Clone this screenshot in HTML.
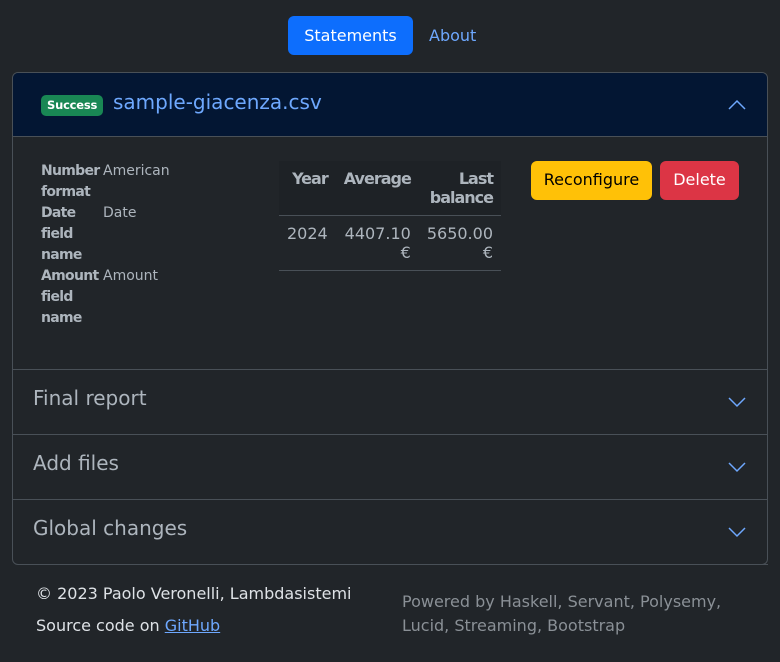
<!DOCTYPE html>
<html><head><meta charset="utf-8"><style>
*{box-sizing:border-box;margin:0;padding:0}
body{width:780px;height:662px;background:#212529;color:#dee2e6;font-family:"DejaVu Sans","Liberation Sans",sans-serif;font-size:16px;position:relative;overflow:hidden}
.abs{position:absolute}
.btnp{left:288px;top:16px;width:125px;height:39px;background:#0d6efd;color:#fff;border-radius:6px;text-align:center;line-height:39px;font-size:16px}
.about{left:429px;top:16px;line-height:39px;color:#6ea8fe}
.card{left:12px;top:72px;width:756px;height:493px;border:1px solid #495057;border-radius:6px;overflow:hidden}
.hdr{left:0;top:0;width:754px;height:64px;background:#031633;border-bottom:1px solid #495057}
.badge{left:28px;top:22px;background:#198754;color:#fff;font-size:11.5px;font-weight:bold;border-radius:5px;padding:0 6px;height:21px;line-height:21px;letter-spacing:-0.2px}
.fname{left:100px;top:17px;color:#6ea8fe;font-size:20px}
.dl{font-size:14px;line-height:21px;color:#adb5bd}
.dt{font-weight:bold;letter-spacing:-0.7px}
.item{left:0;width:754px;height:65px;border-top:1px solid #495057}
.item span{position:absolute;left:20px;top:16px;font-size:20px;color:#adb5bd}
.item svg{position:absolute;left:714px;top:24px}
th,td{font-size:16px;color:#adb5bd;text-align:right;padding:8px 8px;line-height:19px;vertical-align:top;font-weight:normal}
th{background:#1e2226;font-weight:bold;letter-spacing:-1px}
td{border-top:1px solid #495057;border-bottom:1px solid #495057}
</style></head><body>
<div class="abs btnp">Statements</div>
<div class="abs about">About</div>
<div class="abs card">
 <div class="abs hdr">
  <div class="abs badge">Success</div>
  <div class="abs fname">sample-giacenza.csv</div>
  <svg class="abs" style="left:714px;top:24px" width="20" height="16"><path d="M2 12 L10 4 L18 12" fill="none" stroke="#6ea8fe" stroke-width="1.5"/></svg>
 </div>
 <div class="abs dl" style="left:28px;top:88px">
  <div class="abs dt" style="left:0;top:0;width:60px">Number format</div>
  <div class="abs" style="left:62px;top:0">American</div>
  <div class="abs dt" style="left:0;top:42px;width:50px">Date field name</div>
  <div class="abs" style="left:62px;top:42px">Date</div>
  <div class="abs dt" style="left:0;top:105px;width:60px">Amount field name</div>
  <div class="abs" style="left:62px;top:105px">Amount</div>
 </div>
 <table class="abs" style="left:266px;top:88px;width:222px;border-collapse:collapse">
  <tr><th>Year</th><th>Average</th><th>Last balance</th></tr>
  <tr><td>2024</td><td>4407.10 €</td><td>5650.00 €</td></tr>
 </table>
 <div class="abs" style="left:518px;top:88px;width:121px;height:39px;background:#ffc107;color:#000;border-radius:6px;text-align:center;line-height:38px">Reconfigure</div>
 <div class="abs" style="left:647px;top:88px;width:79px;height:39px;background:#dc3545;color:#fff;border-radius:6px;text-align:center;line-height:38px">Delete</div>
 <div class="abs item" style="top:296px"><span>Final report</span><svg width="20" height="16"><path d="M2 4 L10 12 L18 4" fill="none" stroke="#6ea8fe" stroke-width="1.5"/></svg></div>
 <div class="abs item" style="top:361px"><span>Add files</span><svg width="20" height="16"><path d="M2 4 L10 12 L18 4" fill="none" stroke="#6ea8fe" stroke-width="1.5"/></svg></div>
 <div class="abs item" style="top:426px"><span>Global changes</span><svg width="20" height="16"><path d="M2 4 L10 12 L18 4" fill="none" stroke="#6ea8fe" stroke-width="1.5"/></svg></div>
</div>
<div class="abs" style="left:36px;top:564px;width:732px;border-top:1px solid #495057"></div>
<div class="abs" style="left:36px;top:583px;color:#dee2e6;line-height:21px">© 2023 Paolo Veronelli, Lambdasistemi</div>
<div class="abs" style="left:36px;top:615px;color:#dee2e6;line-height:21px">Source code on <span style="color:#6ea8fe;text-decoration:underline">GitHub</span></div>
<div class="abs" style="left:402px;top:590px;color:#8a9096;line-height:24px;width:340px">Powered by Haskell, Servant, Polysemy, Lucid, Streaming, Bootstrap</div>
</body></html>
